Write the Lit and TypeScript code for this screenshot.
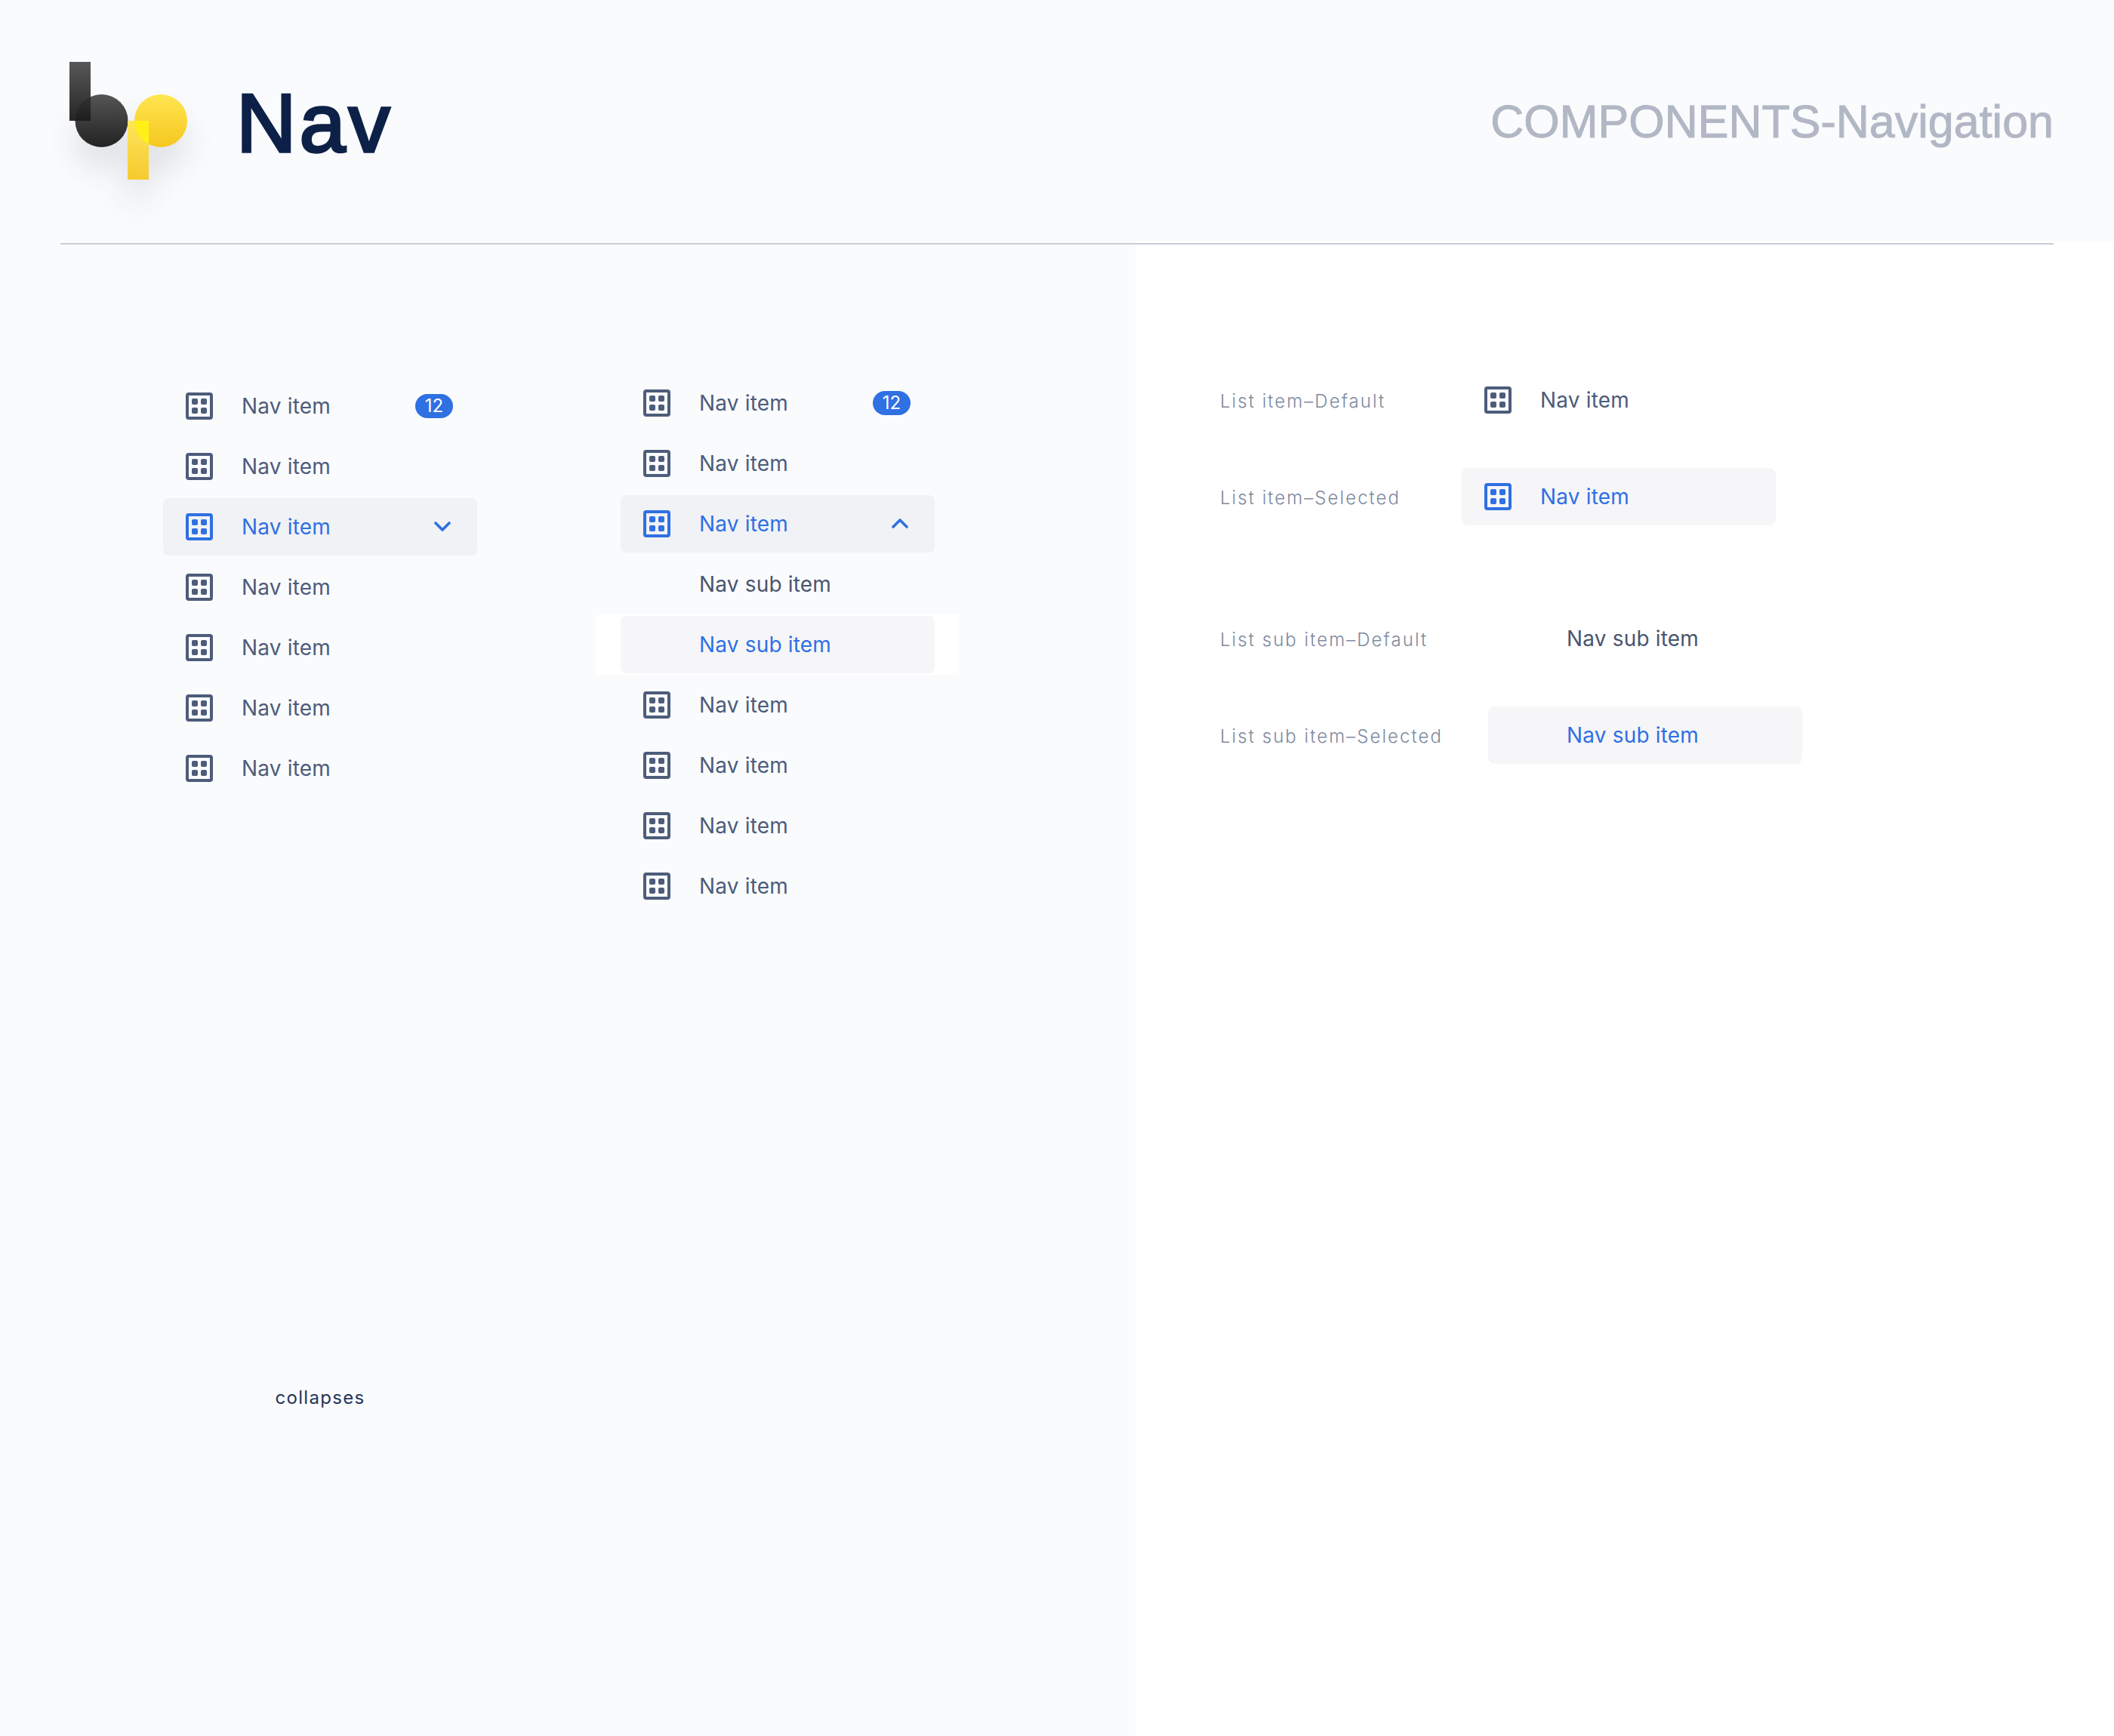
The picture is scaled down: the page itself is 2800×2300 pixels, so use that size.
import { LitElement, html, css, svg } from "lit";
import { customElement } from "lit/decorators.js";

const gridIcon = html`<svg class="icon" viewBox="0 0 36 36" fill="none">
  <rect x="2" y="2" width="32" height="32" rx="2" stroke="currentColor" stroke-width="4" />
  <rect x="8" y="8" width="8" height="8" rx="2" fill="currentColor" />
  <rect x="20" y="8" width="8" height="8" rx="2" fill="currentColor" />
  <rect x="8" y="20" width="8" height="8" rx="2" fill="currentColor" />
  <rect x="20" y="20" width="8" height="8" rx="2" fill="currentColor" />
</svg>`;

const chevron = (up: boolean) => html`<svg class="chevron" viewBox="0 0 22 13" fill="none">
  <path d=${up ? "M2 11L11 2L20 11" : "M2 2L11 11L20 2"} stroke="currentColor" stroke-width="3.6" stroke-linecap="round" stroke-linejoin="round" />
</svg>`;

const logo = svg`<defs>
    <linearGradient id="dark" x1="0" y1="0" x2="0" y2="1"><stop offset="0" stop-color="#555" /><stop offset="1" stop-color="#222" /></linearGradient>
    <linearGradient id="darkbar" x1="0" y1="0" x2="0" y2="1"><stop offset="0" stop-color="#4f4f4f" /><stop offset="1" stop-color="#1b1b1b" /></linearGradient>
    <linearGradient id="yellow" x1="0" y1="0" x2="0" y2="1"><stop offset="0" stop-color="#ffe650" /><stop offset="1" stop-color="#f6c71f" /></linearGradient>
    <filter id="soft" x="-60%" y="-60%" width="220%" height="220%"><feGaussianBlur stdDeviation="22" /></filter>
  </defs>
  <g filter="url(#soft)" fill="#1c2a44" opacity="0.13">
    <circle cx="74" cy="108" r="34" />
    <circle cx="153" cy="108" r="34" />
    <rect x="109" y="108" width="28" height="78" />
  </g>
  <circle cx="74.500" cy="80" r="35" fill="url(#dark)" />
  <rect x="32" y="2" width="28" height="78" fill="url(#darkbar)" opacity="0.95" />
  <circle cx="153" cy="80" r="35" fill="url(#yellow)" />
  <rect x="109" y="80" width="28" height="78" fill="url(#yellow)" opacity="0.92" />
  <path d="M118 80H137V111A35 35 0 0 1 118 80Z" fill="#fff01a" />`;

type NavEntry = { label: string; badge?: string; selected?: boolean; chevron?: "up" | "down"; sub?: boolean };

const firstColumn: NavEntry[] = [
  { label: "Nav item", badge: "12" },
  { label: "Nav item" },
  { label: "Nav item", selected: true, chevron: "down" },
  { label: "Nav item" },
  { label: "Nav item" },
  { label: "Nav item" },
  { label: "Nav item" },
];

const secondColumn: NavEntry[] = [
  { label: "Nav item", badge: "12" },
  { label: "Nav item" },
  { label: "Nav item", selected: true, chevron: "up" },
  { label: "Nav sub item", sub: true },
  { label: "Nav sub item", sub: true, selected: true },
  { label: "Nav item" },
  { label: "Nav item" },
  { label: "Nav item" },
  { label: "Nav item" },
];

@customElement("nav-row")
class NavRow extends LitElement {
  static properties = { entry: { type: Object } };
  declare entry: NavEntry;

  static styles = css`
    :host {
      display: block;
    }
    .row {
      display: flex;
      align-items: center;
      width: 416px;
      height: 76px;
      box-sizing: border-box;
      padding-left: 30px;
      border-radius: 8px;
      color: #4d5c7a;
      font: 400 28px/76px Inter, "Noto Sans", sans-serif;
      letter-spacing: 0.17px;
    }
    .row.selected {
      background: rgba(16, 32, 80, 0.04);
      color: #2f70e3;
    }
    .row.sub {
      padding-left: 104px;
      color: #4a556e;
    }
    .row.sub.selected {
      color: #2f70e3;
    }
    .icon {
      width: 36px;
      height: 36px;
      margin-right: 38px;
      flex: none;
    }
    .label {
      flex: 1;
      white-space: nowrap;
    }
    .badge {
      width: 50px;
      height: 32px;
      margin-right: 32px;
      border-radius: 16px;
      background: #2f70e3;
      color: #fff;
      text-align: center;
      font: 400 24px/32px Inter, "Noto Sans", sans-serif;
      letter-spacing: 0;
    }
    .chevron {
      width: 22px;
      height: 13px;
      margin-right: 35px;
      margin-top: -2px;
    }
  `;

  render() {
    const e = this.entry;
    return html`<div class="row ${e.selected ? "selected" : ""} ${e.sub ? "sub" : ""}">
      ${e.sub ? "" : gridIcon}
      <span class="label">${e.label}</span>
      ${e.badge ? html`<span class="badge">${e.badge}</span>` : ""}
      ${e.chevron ? chevron(e.chevron === "up") : ""}
    </div>`;
  }
}

@customElement("app-root")
export class AppRoot extends LitElement {
  static styles = css`
    :host {
      display: block;
      width: 2800px;
      height: 2300px;
      background: linear-gradient(to right, #fafbfd 1504px, #fff 1504px);
      font-family: "Liberation Sans", Arial, sans-serif;
    }
    header {
      display: flex;
      justify-content: space-between;
      height: 320px;
      box-sizing: border-box;
      padding: 80px 80px 0 60px;
      background: #fafbfd;
    }
    .brand {
      display: flex;
      align-items: flex-start;
    }
    .logo {
      width: 228px;
      height: 240px;
      overflow: visible;
      flex: none;
    }
    .brand h1 {
      margin: 18px 0 0 25px;
      font: 400 110px/130px "Liberation Sans", Arial, sans-serif;
      -webkit-text-stroke: 3.5px #0d2148;
      color: #0d2148;
      letter-spacing: 4px;
    }
    .crumb {
      margin-top: 41px;
      font: 400 61px/80px "Liberation Sans", Arial, sans-serif;
      -webkit-text-stroke: 1px #b1b7c4;
      color: #b1b7c4;
    }
    .rule {
      height: 2px;
      margin: 2px 80px 0;
      background: #c9cdd6;
    }
    .content {
      display: flex;
    }
    .demo {
      width: 1504px;
      display: flex;
      flex: none;
    }
    .col {
      display: flex;
      flex-direction: column;
      gap: 4px;
      width: 416px;
    }
    .col.first {
      margin: 176px 0 0 216px;
    }
    .col.second {
      margin: 172px 0 0 190px;
    }
    .active-sub {
      margin: -2px -32px;
      padding: 2px 32px;
      background: #fff;
    }
    .collapses {
      margin-top: 776px;
      text-align: center;
      font: 400 24px/32px Inter, "Noto Sans", sans-serif;
      letter-spacing: 1.3px;
      color: #23355a;
    }
    .spec {
      padding: 168px 0 0 112px;
    }
    .spec-row {
      display: flex;
      align-items: center;
      color: #7e8a9f;
      font: 300 24px/32px Inter, "Noto Sans", sans-serif;
      letter-spacing: 2.05px;
      margin-bottom: 52px;
    }
    .spec-row.far {
      margin-bottom: 112px;
    }
    .spec-row .name {
      width: 320px;
      flex: none;
      padding-top: 3px;
    }
    .spec-row.subs .name {
      width: 355px;
    }
  `;

  render() {
    return html`
      <header>
        <div class="brand">
          <svg class="logo" viewBox="0 0 228 240">${logo}</svg>
          <h1>Nav</h1>
        </div>
        <div class="crumb">COMPONENTS-Navigation</div>
      </header>
      <div class="rule"></div>
      <div class="content">
        <div class="demo">
          <div class="col first">
            ${firstColumn.map((e) => html`<nav-row .entry=${e}></nav-row>`)}
            <div class="collapses">collapses</div>
          </div>
          <div class="col second">
            ${secondColumn.map((e) =>
              e.sub && e.selected
                ? html`<div class="active-sub"><nav-row .entry=${e}></nav-row></div>`
                : html`<nav-row .entry=${e}></nav-row>`
            )}
          </div>
        </div>
        <div class="spec">
          <div class="spec-row">
            <span class="name">List item–Default</span>
            <nav-row .entry=${{ label: "Nav item" }}></nav-row>
          </div>
          <div class="spec-row far">
            <span class="name">List item–Selected</span>
            <nav-row .entry=${{ label: "Nav item", selected: true }}></nav-row>
          </div>
          <div class="spec-row subs">
            <span class="name">List sub item–Default</span>
            <nav-row .entry=${{ label: "Nav sub item", sub: true }}></nav-row>
          </div>
          <div class="spec-row subs">
            <span class="name">List sub item–Selected</span>
            <nav-row .entry=${{ label: "Nav sub item", sub: true, selected: true }}></nav-row>
          </div>
        </div>
      </div>
    `;
  }
}
